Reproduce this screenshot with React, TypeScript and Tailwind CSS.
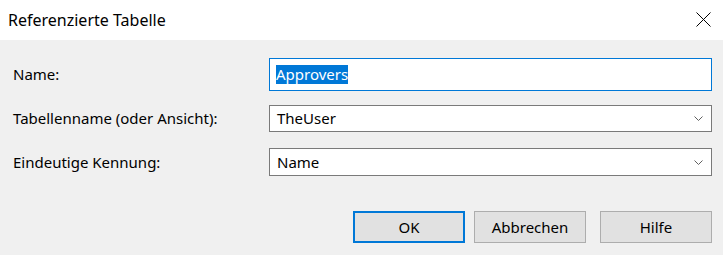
export default function App() {
  const font = { fontFamily: '"Segoe UI", "Noto Sans", sans-serif' };
  return (
    <div
      className="flex h-[255px] w-[723px] flex-col bg-[#f0f0f0] text-[15px] text-black"
      style={font}
    >
      <div className="flex h-[40px] items-center justify-between bg-white pl-[8px] pr-[12px]">
        <span className="text-[16px]">Referenzierte Tabelle</span>
        <svg width="15" height="15" viewBox="0 0 15 15" className="mt-[-2px]">
          <path d="M0.5 0.5 L14.5 14.5 M14.5 0.5 L0.5 14.5" stroke="#000" strokeWidth="1" />
        </svg>
      </div>

      <div className="flex flex-col pl-[13px] pr-[11px] pt-[18px]">
        <div className="flex items-center">
          <span className="w-[256px]">Name:</span>
          <div className="flex h-[33px] flex-1 items-center border border-[#0078d7] bg-white pl-[6px]">
            <span className="bg-[#0078d7] leading-[19px] text-white">Approvers</span>
          </div>
        </div>

        <div className="mt-[14px] flex items-center">
          <span className="w-[256px]">Tabellenname (oder Ansicht):</span>
          <div className="flex h-[27px] flex-1 items-center justify-between border border-[#7a7a7a] bg-white pl-[7px] pr-[8px]">
            <span>TheUser</span>
            <Chevron />
          </div>
        </div>

        <div className="mt-[16px] flex items-center">
          <span className="w-[256px]">Eindeutige Kennung:</span>
          <div className="flex h-[28px] flex-1 items-center justify-between border border-[#7a7a7a] bg-white pl-[7px] pr-[8px]">
            <span>Name</span>
            <Chevron />
          </div>
        </div>

        <div className="mt-[35px] flex justify-end">
          <button
            type="button"
            className="h-[32px] w-[112px] border-2 border-[#0078d7] bg-[#e1e1e1]"
          >
            OK
          </button>
          <button
            type="button"
            className="ml-[9px] h-[32px] w-[112px] border border-[#adadad] bg-[#e1e1e1]"
          >
            Abbrechen
          </button>
          <button
            type="button"
            className="ml-[14px] h-[32px] w-[112px] border border-[#adadad] bg-[#e1e1e1]"
          >
            Hilfe
          </button>
        </div>
      </div>
    </div>
  );
}

function Chevron() {
  return (
    <svg width="9" height="5" viewBox="0 0 9 5">
      <path d="M0.5 0.5 L4.5 4.5 L8.5 0.5" fill="none" stroke="#606060" strokeWidth="1" />
    </svg>
  );
}
